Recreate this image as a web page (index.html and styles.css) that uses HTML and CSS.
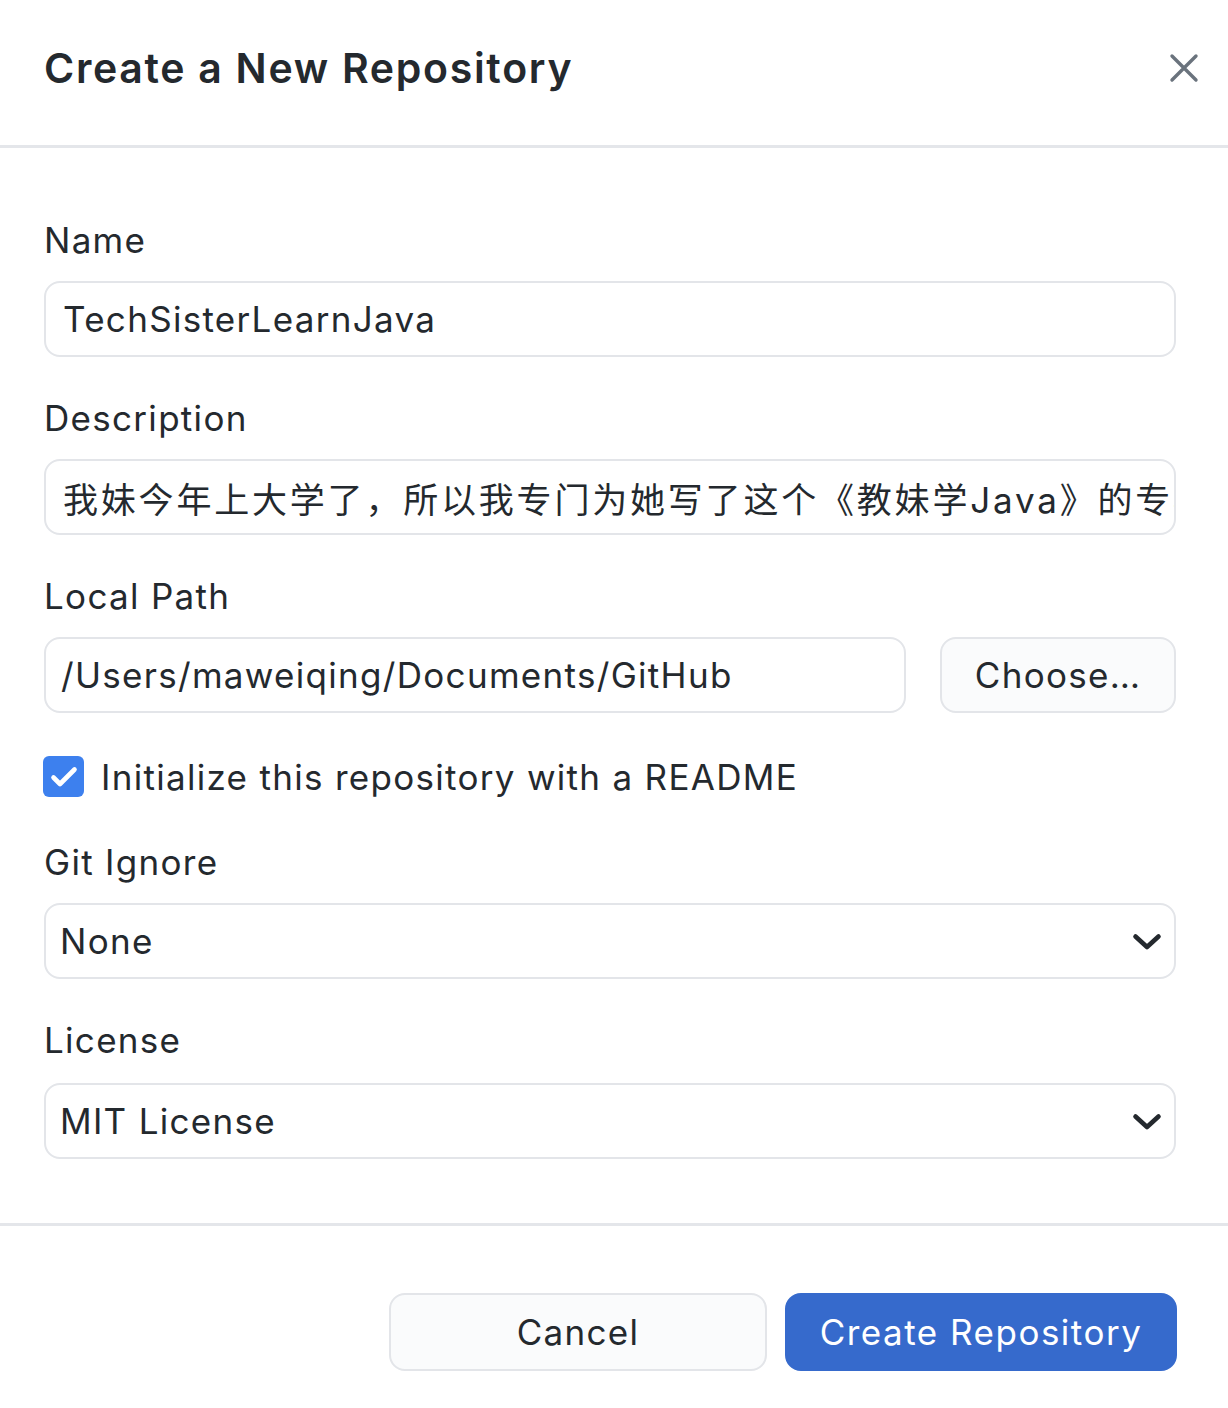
FILE: index.html
```html
<!DOCTYPE html>
<html lang="en">
<head>
<meta charset="utf-8">
<title>Create a New Repository</title>
<link rel="stylesheet" href="styles.css">
</head>
<body>
<div class="dialog">
  <header class="dialog-header">
    <h1 class="dialog-title">Create a New Repository</h1>
    <button class="close-btn" aria-label="Close">
      <svg width="30" height="30" viewBox="0 0 30 30"><path d="M3 3 L27 27 M27 3 L3 27" stroke="#6a737d" stroke-width="3.4" stroke-linecap="round" fill="none"/></svg>
    </button>
  </header>
  <main class="dialog-body">
    <div class="field field-name">
      <div class="label">Name</div>
      <div class="text-input"><span class="value">TechSisterLearnJava</span></div>
    </div>
    <div class="field">
      <div class="label">Description</div>
      <div class="text-input"><span class="value cjk">我妹今年上大学了，所以我专门为她写了这个《教妹学Java》的专栏</span></div>
    </div>
    <div class="field">
      <div class="label">Local Path</div>
      <div class="path-row">
        <div class="text-input path-input"><span class="value">/Users/maweiqing/Documents/GitHub</span></div>
        <button class="btn choose-btn">Choose…</button>
      </div>
    </div>
    <label class="check-row">
      <span class="checkbox">
        <svg width="28" height="24" viewBox="0 0 28 24"><path d="M3.5 12.5 L10 19 L24.5 4.5" stroke="#fff" stroke-width="4.6" stroke-linecap="round" stroke-linejoin="round" fill="none"/></svg>
      </span>
      <span class="check-label">Initialize this repository with a README</span>
    </label>
    <div class="field field-gitignore">
      <div class="label">Git Ignore</div>
      <div class="select"><span class="value">None</span>
        <svg class="chev" width="30" height="20" viewBox="0 0 30 20"><path d="M3.5 4.5 L15 15 L26.5 4.5" stroke="#24292e" stroke-width="4.6" stroke-linecap="round" stroke-linejoin="round" fill="none"/></svg>
      </div>
    </div>
    <div class="field field-license">
      <div class="label">License</div>
      <div class="select"><span class="value">MIT License</span>
        <svg class="chev" width="30" height="20" viewBox="0 0 30 20"><path d="M3.5 4.5 L15 15 L26.5 4.5" stroke="#24292e" stroke-width="4.6" stroke-linecap="round" stroke-linejoin="round" fill="none"/></svg>
      </div>
    </div>
  </main>
  <footer class="dialog-footer">
    <button class="btn cancel-btn">Cancel</button>
    <button class="btn primary-btn">Create Repository</button>
  </footer>
</div>
</body>
</html>
```

FILE: styles.css
```css
* { box-sizing: border-box; }
html, body { margin: 0; padding: 0; background: #fff; }
body {
  font-family: Inter, "Noto Sans", "Noto Sans CJK SC", sans-serif;
  color: #24292e;
  width: 1228px;
  height: 1408px;
  overflow: hidden;
  letter-spacing: 1.3px;
}
.dialog { width: 1228px; display: flex; flex-direction: column; }

.dialog-header {
  height: 148px;
  border-bottom: 3px solid #e4e6ea;
  display: flex;
  align-items: center;
  justify-content: space-between;
  padding: 0 28px 10px 44px;
}
.dialog-title {
  margin: 0;
  font-size: 41px;
  font-weight: 600;
  letter-spacing: 1.7px;
  color: #24292e;
}
.close-btn {
  border: 0; background: none; padding: 0; width: 32px; height: 32px;
  display: flex; align-items: center; justify-content: center; cursor: pointer;
}

.dialog-body {
  padding: 70px 52px 0 44px;
  display: flex;
  flex-direction: column;
  height: 1078px;
  border-bottom: 3px solid #e4e6ea;
}
.field { display: flex; flex-direction: column; }
.field + .field { margin-top: 39px; }
.label {
  font-size: 35px;
  line-height: 44px;
  height: 44px;
  margin-bottom: 19px;
  color: #24292e;
}
.text-input, .select {
  height: 76px;
  border: 2.5px solid #e3e5e9;
  border-radius: 16px;
  display: flex;
  align-items: center;
  padding: 0 16px 0 17px;
  overflow: hidden;
  background: #fff;
}
.value {
  font-size: 35px;
  white-space: nowrap;
  color: #24292e;
}
.cjk { font-family: Inter, "Noto Sans CJK SC", sans-serif; font-size: 35px; letter-spacing: 2.8px; }
.path-row { display: flex; gap: 34px; }
.path-input { flex: 1; padding-left: 15px; }
.btn {
  font-family: Inter, "Noto Sans", sans-serif;
  font-size: 35px;
  letter-spacing: 1.3px;
  color: #24292e;
  border: 2.5px solid #e3e5e9;
  border-radius: 16px;
  background: #fafbfc;
  height: 76px;
  cursor: pointer;
}
.choose-btn { width: 236px; }

.check-row {
  display: flex;
  align-items: center;
  margin-top: 43px;
  height: 41px;
}
.checkbox {
  width: 41px; height: 41px;
  border-radius: 6px;
  background: #3d80ee;
  display: flex; align-items: center; justify-content: center;
  margin-left: -1px;
}
.check-label { font-size: 35px; margin-left: 17px; }

.field.field-gitignore { margin-top: 43px; }
.field.field-license { margin-top: 39px; }
.field-license .label { margin-bottom: 21px; }
.select { padding-left: 14px; justify-content: space-between; padding-right: 12px; }
.chev { margin-top: 2px; }

.dialog-footer {
  display: flex;
  justify-content: flex-end;
  gap: 18px;
  padding: 67px 51px 0 0;
}
.cancel-btn { width: 378px; height: 78px; }
.primary-btn {
  width: 392px; height: 78px;
  background: #366acc;
  border-color: #366acc;
  color: #fff;
  letter-spacing: 1.5px;
}
```
